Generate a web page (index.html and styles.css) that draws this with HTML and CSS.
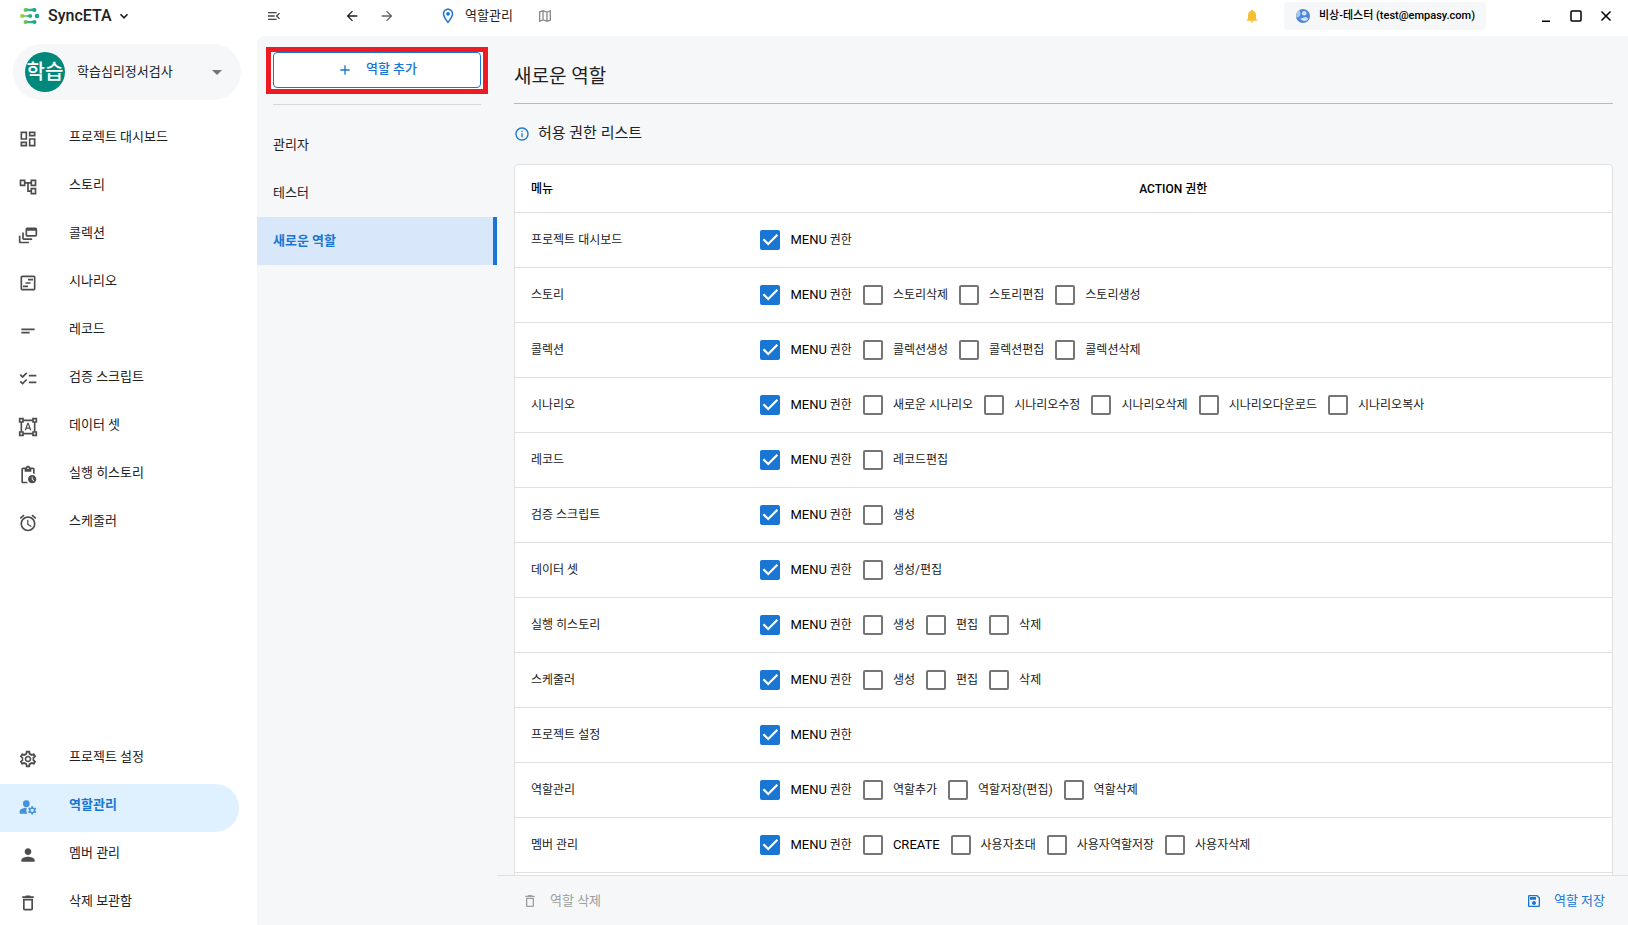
FILE: index.html
```html
<!DOCTYPE html>
<html lang="ko">
<head>
<meta charset="utf-8">
<title>SyncETA - 역할관리</title>
<link rel="stylesheet" href="styles.css">
</head>
<body>
<div class="app">
  <aside class="sidebar">
    <button class="brand" type="button">
      <svg class="brand-logo" viewBox="0 0 20 18" aria-hidden="true">
        <defs>
          <linearGradient id="lg" gradientUnits="userSpaceOnUse" x1="1" y1="0" x2="17" y2="0"><stop offset="0" stop-color="#a4d03c"/><stop offset=".6" stop-color="#22b08a"/><stop offset="1" stop-color="#12a68c"/></linearGradient>
        </defs>
        <g fill="url(#lg)">
          <path d="M5.500 1a2 2 0 0 0 0 4c1.500 0 1.500-1 3-1h3c1.500 0 1.500 1 3 1a2 2 0 0 0 0-4c-1.500 0-1.500.7-3 .7h-3C7 1.700 7 1 5.500 1z"/>
          <path d="M2 7a2 2 0 0 0 0 4c1.500 0 1.500-1.200 3-1.200h2c1.500 0 1.700 1.200 3.200 1.200a2 2 0 0 0 0-4C8.700 7 8.500 8.200 7 8.200H5C3.500 8.200 3.500 7 2 7z"/>
          <circle cx="17" cy="9" r="2.300"/>
          <path d="M5.500 13a2 2 0 0 0 0 4c1.500 0 1.500-.7 3-.7h3c1.500 0 1.500.7 3 .7a2 2 0 0 0 0-4c-1.500 0-1.500 1-3 1h-3c-1.500 0-1.500-1-3-1z"/>
        </g>
      </svg>
      <span>SyncETA</span>
      <svg class="chevron" viewBox="0 0 24 24" aria-hidden="true"><path d="M5 8.500l7 7 7-7" fill="none" stroke="currentColor" stroke-width="3.500"/></svg>
    </button>
    <button class="project" type="button">
      <span class="avatar">학습</span>
      <span class="project-name">학습심리정서검사</span>
      <svg class="ic24" viewBox="0 0 24 24" aria-hidden="true"><path d="M7 10l5 5 5-5z"/></svg>
    </button>
    <nav class="nav">
      <a class="nav-item" href="#"><svg class="ic20" viewBox="0 0 24 24"><path d="M19 5v2h-4V5h4M9 5v6H5V5h4m10 8v6h-4v-6h4M9 17v2H5v-2h4M21 3h-8v6h8V3zM11 3H3v10h8V3zm10 8h-8v10h8V11zm-10 4H3v6h8v-6z"/></svg><span>프로젝트 대시보드</span></a>
      <a class="nav-item" href="#"><svg class="ic20" viewBox="0 0 24 24"><path d="M22 11V3h-7v3H9V3H2v8h7V8h2v10h4v3h7v-8h-7v3h-2V8h2v3h7zM7 9H4V5h3v4zm10 6h3v4h-3v-4zm0-10h3v4h-3V5z"/></svg><span>스토리</span></a>
      <a class="nav-item" href="#"><svg class="ic20" viewBox="0 0 24 24"><path d="M3 13H1v7c0 1.100.900 2 2 2h10v-2H3v-7z"/><path d="M7 9H5v7c0 1.100.900 2 2 2h10v-2H7V9z"/><path d="M21 3H11c-1.100 0-2 .900-2 2v7c0 1.100.900 2 2 2h10c1.100 0 2-.900 2-2V5c0-1.100-.900-2-2-2zm0 9H11V7h10v5z"/></svg><span>콜렉션</span></a>
      <a class="nav-item" href="#"><svg class="ic20" viewBox="0 0 24 24"><path d="M19 5v14H5V5h14m0-2H5c-1.100 0-2 .900-2 2v14c0 1.100.900 2 2 2h14c1.100 0 2-.900 2-2V5c0-1.100-.900-2-2-2z"/><path d="M12 15H6v2h6v-2zM15 11H9v2h6v-2zM18 7h-6v2h6V7z"/></svg><span>시나리오</span></a>
      <a class="nav-item" href="#"><svg class="ic20" viewBox="0 0 24 24"><path d="M4 9h16v2H4V9zm0 4h10v2H4v-2z"/></svg><span>레코드</span></a>
      <a class="nav-item" href="#"><svg class="ic20" viewBox="0 0 24 24"><path d="M22 7h-9v2h9V7zm0 8h-9v2h9v-2zM5.540 11L2 7.460l1.410-1.410 2.120 2.120 4.240-4.240 1.410 1.410L5.540 11zm0 8L2 15.460l1.410-1.410 2.120 2.120 4.240-4.240 1.410 1.410L5.540 19z"/></svg><span>검증 스크립트</span></a>
      <a class="nav-item" href="#"><svg class="ic20" viewBox="0 0 24 24"><path d="M23 7V1h-6v2H7V1H1v6h2v10H1v6h6v-2h10v2h6v-6h-2V7h2zM3 3h2v2H3V3zm2 18H3v-2h2v2zm12-2H7v-2H5V7h2V5h10v2h2v10h-2v2zm4 2h-2v-2h2v2zM19 5V3h2v2h-2zm-5.270 9h-3.490l-.730 2H7.890l3.400-9h1.400l3.410 9h-1.630l-.740-2zm-3.040-1.260h2.610L12 8.910l-1.310 3.830z"/></svg><span>데이터 셋</span></a>
      <a class="nav-item" href="#"><svg class="ic20" viewBox="0 0 24 24"><path d="M17 12c-2.760 0-5 2.240-5 5s2.240 5 5 5 5-2.240 5-5-2.240-5-5-5zm1.650 7.350L16.500 17.200V14h1v2.790l1.850 1.850-.7.710zM18 3h-3.180C14.400 1.840 13.300 1 12 1s-2.400.840-2.820 2H6c-1.100 0-2 .900-2 2v15c0 1.100.900 2 2 2h6.110c-.590-.570-1.070-1.250-1.420-2H6V5h2v3h8V5h2v5.080c.710.100 1.380.310 2 .600V5c0-1.100-.900-2-2-2zm-6 2c-.550 0-1-.450-1-1s.450-1 1-1 1 .450 1 1-.450 1-1 1z"/></svg><span>실행 히스토리</span></a>
      <a class="nav-item" href="#"><svg class="ic20" viewBox="0 0 24 24"><path d="M22 5.720l-4.600-3.860-1.290 1.530 4.600 3.860L22 5.720zM7.880 3.390L6.600 1.860 2 5.710l1.290 1.530 4.590-3.850zM12.500 8H11v6l4.750 2.850.75-1.230-4-2.370V8zM12 4c-4.970 0-9 4.030-9 9s4.020 9 9 9c4.970 0 9-4.030 9-9s-4.030-9-9-9zm0 16c-3.870 0-7-3.130-7-7s3.130-7 7-7 7 3.130 7 7-3.130 7-7 7z"/></svg><span>스케줄러</span></a>
    </nav>
    <nav class="nav nav-bottom">
      <a class="nav-item" href="#"><svg class="ic20" viewBox="0 0 24 24"><path d="M19.430 12.980c.040-.320.070-.640.070-.980s-.030-.660-.070-.980l2.110-1.650c.190-.150.240-.420.120-.640l-2-3.460c-.090-.160-.260-.250-.440-.250-.060 0-.120.010-.170.030l-2.490 1c-.520-.400-1.080-.730-1.690-.980l-.380-2.650C14.460 2.180 14.250 2 14 2h-4c-.250 0-.460.180-.490.420l-.380 2.650c-.610.250-1.170.590-1.690.980l-2.490-1c-.230-.090-.490 0-.610.220l-2 3.460c-.130.220-.070.490.120.640l2.110 1.650c-.040.320-.070.650-.070.980s.030.660.070.980l-2.110 1.650c-.190.150-.240.420-.120.640l2 3.460c.120.220.380.310.610.220l2.490-1c.520.400 1.080.730 1.690.980l.380 2.650c.030.240.240.420.490.420h4c.250 0 .460-.180.490-.420l.380-2.650c.610-.250 1.170-.590 1.690-.980l2.490 1c.230.090.490 0 .610-.220l2-3.460c.120-.220.070-.490-.120-.640l-2.110-1.650zm-1.980-1.710c.040.310.050.520.050.730s-.020.430-.050.730l-.140 1.130 1.600 1.250-.700 1.210-2.120-.850-.900.680c-.430.320-.840.560-1.250.730l-1.060.430-.320 2.190h-1.400l-.300-2.190-1.060-.430c-.430-.180-.830-.410-1.230-.710l-.910-.700-2.120.850-.700-1.210 1.600-1.250-.140-1.130c-.030-.310-.050-.540-.050-.740s.020-.430.050-.730l.140-1.130-1.600-1.250.700-1.210 2.120.850.900-.680c.430-.320.840-.560 1.250-.730l1.060-.430.320-2.190h1.400l.300 2.190 1.060.430c.430.180.830.410 1.230.710l.910.700 2.120-.850.700 1.210-1.600 1.250.140 1.130zM12 8c-2.210 0-4 1.790-4 4s1.790 4 4 4 4-1.790 4-4-1.790-4-4-4zm0 6c-1.100 0-2-.900-2-2s.900-2 2-2 2 .900 2 2-.900 2-2 2z"/></svg><span>프로젝트 설정</span></a>
      <a class="nav-item active" href="#" aria-current="page"><svg class="ic20" viewBox="0 0 24 24"><circle cx="10" cy="8" r="4"/><path d="M10.670 13.020C10.450 13.010 10.230 13 10 13c-2.420 0-4.680.670-6.610 1.820C2.510 15.340 2 16.320 2 17.350V20h9.260A6.960 6.960 0 0 1 10 16c0-1.070.250-2.070.670-2.980z"/><path d="M20.750 16c0-.220-.030-.420-.060-.630l1.140-1.010-1-1.730-1.450.490c-.320-.270-.680-.480-1.080-.630L18 11h-2l-.300 1.490c-.400.150-.760.360-1.080.630l-1.450-.490-1 1.730 1.140 1.010c-.030.210-.060.410-.060.630s.030.420.060.630l-1.140 1.010 1 1.730 1.450-.490c.320.270.680.480 1.080.630L16 21h2l.300-1.490c.400-.150.760-.360 1.080-.630l1.450.490 1-1.730-1.140-1.010c.030-.210.060-.410.060-.630zM17 18c-1.100 0-2-.900-2-2s.900-2 2-2 2 .900 2 2-.900 2-2 2z"/></svg><span>역할관리</span></a>
      <a class="nav-item" href="#"><svg class="ic20" viewBox="0 0 24 24"><path d="M12 12c2.210 0 4-1.790 4-4s-1.790-4-4-4-4 1.790-4 4 1.790 4 4 4zm0 2c-2.670 0-8 1.340-8 4v2h16v-2c0-2.660-5.330-4-8-4z"/></svg><span>멤버 관리</span></a>
      <a class="nav-item" href="#"><svg class="ic20" viewBox="0 0 24 24"><path d="M6 19c0 1.100.900 2 2 2h8c1.100 0 2-.900 2-2V7H6v12zM8 9h8v10H8V9zm7.500-5l-1-1h-5l-1 1H5v2h14V4h-3.500z"/></svg><span>삭제 보관함</span></a>
    </nav>
  </aside>

  <div class="workspace">
    <header class="topbar">
      <button class="icon-btn menu-btn" type="button" aria-label="메뉴 접기"><svg class="ic16" viewBox="0 0 24 24"><path d="M3 18h13v-2H3v2zm0-5h10v-2H3v2zm0-7v2h13V6H3zm18 9.590L17.420 12 21 8.410 19.590 7l-5 5 5 5L21 15.590z"/></svg></button>
      <button class="icon-btn back-btn" type="button" aria-label="뒤로"><svg class="ic16" viewBox="0 0 24 24"><path d="M20 11H7.830l5.590-5.590L12 4l-8 8 8 8 1.410-1.410L7.830 13H20v-2z"/></svg></button>
      <button class="icon-btn forward-btn" type="button" aria-label="앞으로"><svg class="ic16" viewBox="0 0 24 24"><path d="M12 4l-1.410 1.410L16.170 11H4v2h12.170l-5.580 5.590L12 20l8-8z"/></svg></button>
      <span class="crumb"><svg class="ic18" viewBox="0 0 24 24"><path d="M12 2C8.130 2 5 5.130 5 9c0 5.250 7 13 7 13s7-7.750 7-13c0-3.870-3.130-7-7-7zM7 9c0-2.760 2.240-5 5-5s5 2.240 5 5c0 2.880-2.880 7.190-5 9.880C9.920 16.210 7 11.850 7 9z"/><circle cx="12" cy="9" r="2.500"/></svg><span>역할관리</span></span>
      <button class="icon-btn map-btn" type="button" aria-label="지도"><svg class="ic16" viewBox="0 0 24 24"><path d="M20.500 3l-.160.030L15 5.100 9 3 3.360 4.900c-.210.070-.360.250-.360.480V20.500c0 .280.220.500.500.500l.160-.030L9 18.900l6 2.100 5.640-1.900c.210-.070.360-.250.360-.480V3.500c0-.280-.220-.500-.500-.500zM10 5.470l4 1.400v11.660l-4-1.400V5.470zm-5 .990l3-1.010v11.700l-3 1.160V6.460zm14 11.080l-3 1.010V6.860l3-1.160v11.840z"/></svg></button>
      <div class="top-right">
        <button class="icon-btn bell" type="button" aria-label="알림"><svg class="ic16" viewBox="0 0 24 24"><path d="M12 22c1.100 0 2-.900 2-2h-4c0 1.100.890 2 2 2zm6-6v-5c0-3.070-1.640-5.640-4.500-6.320V4c0-.830-.670-1.500-1.500-1.500s-1.500.670-1.500 1.500v.680C7.630 5.360 6 7.920 6 11v5l-2 2v1h16v-1l-2-2z"/></svg></button>
        <button class="user" type="button">
          <svg class="ic14" viewBox="0 0 14 14" aria-hidden="true"><circle cx="7" cy="7" r="7" fill="#4f86d6"/><path d="M3.500 1C1 2.500 0 5 .300 8.500 2.500 9 4.500 7 4.500 4.500z" fill="#a9c8f3"/><circle cx="8.200" cy="4.300" r="2.300" fill="#cfe0fa"/><path d="M4 9.300c2 .7 3.500-1.300 5-1.300s2.500.8 3.300 2C11 12.300 6 13.200 4 9.300z" fill="#cfe0fa"/></svg>
          <span>비상-테스터 (test@empasy.com)</span>
        </button>
        <div class="win">
          <button class="icon-btn" type="button" aria-label="최소화"><svg class="ic12" viewBox="0 0 12 12"><path d="M2 10.500h8v1.500H2z"/></svg></button>
          <button class="icon-btn" type="button" aria-label="최대화"><svg class="ic12" viewBox="0 0 12 12"><rect x="1" y="1" width="10" height="10" rx="1" fill="none" stroke="currentColor" stroke-width="1.500"/></svg></button>
          <button class="icon-btn" type="button" aria-label="닫기"><svg class="ic12" viewBox="0 0 12 12"><path d="M1.500 1.500l9 9M10.500 1.500l-9 9" stroke="currentColor" stroke-width="1.500"/></svg></button>
        </div>
      </div>
    </header>

    <div class="content">
      <section class="roles">
        <div class="add-frame">
          <button class="add-btn" type="button"><svg class="ic16" viewBox="0 0 24 24"><path d="M19 13h-6v6h-2v-6H5v-2h6V5h2v6h6v2z"/></svg><span>역할 추가</span></button>
        </div>
        <hr class="roles-line">
        <div class="role-list">
          <a class="role" href="#">관리자</a>
          <a class="role" href="#">테스터</a>
          <a class="role selected" href="#" aria-current="true">새로운 역할</a>
        </div>
      </section>

      <main class="detail">
        <div class="detail-body">
          <h1 class="title">새로운 역할</h1>
          <h2 class="subtitle"><svg class="ic16" viewBox="0 0 24 24"><path d="M11 7h2v2h-2zm0 4h2v6h-2zm1-9C6.480 2 2 6.480 2 12s4.480 10 10 10 10-4.480 10-10S17.520 2 12 2zm0 18c-4.410 0-8-3.590-8-8s3.590-8 8-8 8 3.590 8 8-3.590 8-8 8z"/></svg><span>허용 권한 리스트</span></h2>
          <div class="table-card">
            <table class="perms">
              <thead><tr><th class="col-menu" scope="col">메뉴</th><th class="col-action" scope="col"><span class="en">ACTION</span> 권한</th></tr></thead>
              <tbody>
                <tr><td>프로젝트 대시보드</td><td><div class="checks"><label><input type="checkbox" checked><span><span class="en">MENU</span> 권한</span></label></div></td></tr>
                <tr><td>스토리</td><td><div class="checks"><label><input type="checkbox" checked><span><span class="en">MENU</span> 권한</span></label><label><input type="checkbox"><span>스토리삭제</span></label><label><input type="checkbox"><span>스토리편집</span></label><label><input type="checkbox"><span>스토리생성</span></label></div></td></tr>
                <tr><td>콜렉션</td><td><div class="checks"><label><input type="checkbox" checked><span><span class="en">MENU</span> 권한</span></label><label><input type="checkbox"><span>콜렉션생성</span></label><label><input type="checkbox"><span>콜렉션편집</span></label><label><input type="checkbox"><span>콜렉션삭제</span></label></div></td></tr>
                <tr><td>시나리오</td><td><div class="checks"><label><input type="checkbox" checked><span><span class="en">MENU</span> 권한</span></label><label><input type="checkbox"><span>새로운 시나리오</span></label><label><input type="checkbox"><span>시나리오수정</span></label><label><input type="checkbox"><span>시나리오삭제</span></label><label><input type="checkbox"><span>시나리오다운로드</span></label><label><input type="checkbox"><span>시나리오복사</span></label></div></td></tr>
                <tr><td>레코드</td><td><div class="checks"><label><input type="checkbox" checked><span><span class="en">MENU</span> 권한</span></label><label><input type="checkbox"><span>레코드편집</span></label></div></td></tr>
                <tr><td>검증 스크립트</td><td><div class="checks"><label><input type="checkbox" checked><span><span class="en">MENU</span> 권한</span></label><label><input type="checkbox"><span>생성</span></label></div></td></tr>
                <tr><td>데이터 셋</td><td><div class="checks"><label><input type="checkbox" checked><span><span class="en">MENU</span> 권한</span></label><label><input type="checkbox"><span>생성/편집</span></label></div></td></tr>
                <tr><td>실행 히스토리</td><td><div class="checks"><label><input type="checkbox" checked><span><span class="en">MENU</span> 권한</span></label><label><input type="checkbox"><span>생성</span></label><label><input type="checkbox"><span>편집</span></label><label><input type="checkbox"><span>삭제</span></label></div></td></tr>
                <tr><td>스케줄러</td><td><div class="checks"><label><input type="checkbox" checked><span><span class="en">MENU</span> 권한</span></label><label><input type="checkbox"><span>생성</span></label><label><input type="checkbox"><span>편집</span></label><label><input type="checkbox"><span>삭제</span></label></div></td></tr>
                <tr><td>프로젝트 설정</td><td><div class="checks"><label><input type="checkbox" checked><span><span class="en">MENU</span> 권한</span></label></div></td></tr>
                <tr><td>역할관리</td><td><div class="checks"><label><input type="checkbox" checked><span><span class="en">MENU</span> 권한</span></label><label><input type="checkbox"><span>역할추가</span></label><label><input type="checkbox"><span>역할저장(편집)</span></label><label><input type="checkbox"><span>역할삭제</span></label></div></td></tr>
                <tr><td>멤버 관리</td><td><div class="checks"><label><input type="checkbox" checked><span><span class="en">MENU</span> 권한</span></label><label><input type="checkbox"><span class="en">CREATE</span></label><label><input type="checkbox"><span>사용자초대</span></label><label><input type="checkbox"><span>사용자역할저장</span></label><label><input type="checkbox"><span>사용자삭제</span></label></div></td></tr>
              </tbody>
            </table>
          </div>
        </div>
        <footer class="actions">
          <button class="action" type="button" disabled><svg class="ic16" viewBox="0 0 24 24"><path d="M6 19c0 1.100.900 2 2 2h8c1.100 0 2-.900 2-2V7H6v12zM8 9h8v10H8V9zm7.500-5l-1-1h-5l-1 1H5v2h14V4h-3.500z"/></svg><span>역할 삭제</span></button>
          <button class="action primary" type="button"><svg class="ic16" viewBox="0 0 24 24"><path d="M17 3H5c-1.110 0-2 .900-2 2v14c0 1.100.890 2 2 2h14c1.100 0 2-.900 2-2V7l-4-4zm2 16H5V5h11.170L19 7.830V19zm-7-7c-1.660 0-3 1.340-3 3s1.340 3 3 3 3-1.340 3-3-1.340-3-3-3zM6 6h9v4H6z"/></svg><span>역할 저장</span></button>
        </footer>
      </main>
    </div>
  </div>
</div>
</body>
</html>
```
FILE: styles.css
```css
:root {
  --blue: #1976d2;
  --panel: #f5f7f9;
  --line: #e0e0e0;
  --text: #212121;
}

* { box-sizing: border-box; }

body {
  margin: 0;
  font: 13px/20px Roboto, "Noto Sans CJK KR", sans-serif;
  color: var(--text);
  background: #fff;
}

button {
  font: inherit;
  color: inherit;
  background: none;
  border: 0;
  padding: 0;
  cursor: pointer;
}

a { color: inherit; text-decoration: none; }
svg { display: block; flex: none; fill: currentColor; }

.ic12 { width: 12px; height: 12px; }
.ic14 { width: 14px; height: 14px; }
.ic16 { width: 16px; height: 16px; }
.ic18 { width: 18px; height: 18px; }
.ic20 { width: 20px; height: 20px; }
.ic24 { width: 24px; height: 24px; }

.app { display: flex; height: 100vh; overflow: hidden; }

/* Sidebar */
.sidebar {
  flex: 0 0 257px;
  display: flex;
  flex-direction: column;
}

.brand {
  display: flex;
  align-items: center;
  gap: 8px;
  height: 32px;
  padding-left: 20px;
  font-size: 16px;
  font-weight: 500;
}
.chevron { width: 12px; height: 12px; margin-left: -2px; }
.brand-logo { width: 20px; height: 18px; }

.project {
  display: flex;
  align-items: center;
  height: 56px;
  margin: 12px 16px 0 13px;
  padding: 0 12px;
  border-radius: 28px;
  background: var(--panel);
}
.project .ic24 { color: #757575; }
.avatar {
  width: 40px;
  height: 40px;
  border-radius: 50%;
  background: #00897b;
  color: #fff;
  font-size: 20px;
  font-weight: 500;
  line-height: 40px;
  text-align: center;
}
.project-name { flex: 1; padding-left: 12px; text-align: left; }

.nav { display: flex; flex-direction: column; padding-top: 15px; }
.nav-bottom { margin: auto 0 -3px; padding: 0; }
.nav-item {
  display: flex;
  align-items: center;
  gap: 31px;
  height: 48px;
  margin-right: 18px;
  padding-left: 18px;
}
.nav-item span { padding-bottom: 4px; }
.nav-item svg { color: #4d4d4d; }
.nav-bottom .nav-item { padding-bottom: 2px; }
.nav-item.active {
  border-radius: 0 24px 24px 0;
  background: #dff0ff;
  color: var(--blue);
  font-weight: 700;
}
.nav-item.active svg { color: #4791db; }

/* Top bar */
.workspace { flex: 1; min-width: 0; display: flex; flex-direction: column; }
.topbar {
  display: flex;
  align-items: center;
  flex: 0 0 36px;
  padding: 0 16px 4px 9px;
}
.icon-btn { flex: none; }
.menu-btn { color: #424242; }
.back-btn { margin-left: 62px; }
.forward-btn { margin-left: 19px; color: #616161; }
.crumb { display: flex; align-items: center; gap: 8px; margin-left: 44px; }
.crumb svg { color: var(--blue); }
.map-btn { margin-left: 24px; color: #8a8a8a; }
.top-right { display: flex; align-items: center; margin-left: auto; }
.bell { color: #f4c030; }
.user {
  display: flex;
  align-items: center;
  gap: 9px;
  height: 28px;
  margin: 0 54px 0 24px;
  padding: 0 11px 0 12px;
  border-radius: 4px;
  background: var(--panel);
  color: #000;
  font-size: 11px;
  font-weight: 500;
}
.win { display: flex; gap: 18px; color: #000; }

/* Content */
.content {
  flex: 1;
  min-height: 0;
  display: flex;
  background: var(--panel);
  border-top-left-radius: 8px;
}

.roles { flex: 0 0 240px; padding-top: 11px; }
.add-frame {
  margin: 0 9px;
  border: 5px solid #ed1c24;
  padding: 0 2px 1px;
  background: #fff;
}
.add-btn {
  display: flex;
  align-items: center;
  justify-content: center;
  gap: 13px;
  width: 100%;
  height: 36px;
  border: 1px solid var(--blue);
  border-radius: 4px;
  background: #fff;
  color: var(--blue);
  font-weight: 500;
}
.add-btn span { padding-bottom: 2px; }
.roles-line { margin: 10px 16px 16px; border: 0; border-top: 1px solid #d6d8da; }
.role { display: block; height: 48px; padding: 12px 16px; line-height: 24px; }
.role.selected {
  border-right: 4px solid var(--blue);
  background: #d8e8fa;
  color: var(--blue);
  font-weight: 700;
}

.detail { flex: 1; min-width: 0; display: flex; flex-direction: column; }
.detail-body { flex: 1; min-height: 0; overflow: hidden; padding: 22px 15px 0 17px; }
.title {
  margin: 0;
  height: 46px;
  border-bottom: 1px solid #b8babc;
  font-size: 19px;
  font-weight: 400;
  line-height: 38px;
}
.subtitle {
  display: flex;
  align-items: center;
  gap: 8px;
  margin: 0;
  height: 60px;
  font-size: 15px;
  font-weight: 400;
}
.subtitle span { padding-bottom: 2px; }
.subtitle svg { color: var(--blue); }

.table-card {
  border: 1px solid var(--line);
  border-radius: 4px;
  background: #fff;
  height: 100%;
}
.perms { width: 100%; border-collapse: separate; border-spacing: 0; font-size: 12px; }
.perms th { height: 48px; padding: 0 16px; border-bottom: 1px solid var(--line); font-weight: 500; color: #000; }
.perms td { height: 55px; padding: 0 16px; border-bottom: 1px solid var(--line); }
.col-menu { width: 20%; text-align: left; }
.col-action { text-align: center; }
.perms td:last-child { padding-left: 26px; }
.en { font-size: 13px; color: #000; }
th .en { font-size: 12px; }
.checks { display: flex; gap: 11px; }
.checks label { display: flex; align-items: center; gap: 10px; }
.checks input {
  appearance: none;
  flex: none;
  width: 20px;
  height: 20px;
  margin: 0;
  border: 2px solid #757575;
  border-radius: 2px;
}
.checks input:checked { border: 0; background: var(--blue); }
.checks input:checked::after {
  content: "";
  display: block;
  height: 100%;
  background: #fff;
  clip-path: polygon(39% 78%, 11% 50%, 19% 42%, 39% 62%, 81% 20%, 89% 28%);
}

.actions {
  display: flex;
  align-items: center;
  justify-content: space-between;
  flex: 0 0 50px;
  padding: 0 23px 0 25px;
  border-top: 1px solid var(--line);
}
.action { display: flex; align-items: center; gap: 12px; }
.action:disabled { color: #9e9e9e; }
.action.primary { color: var(--blue); }
```
